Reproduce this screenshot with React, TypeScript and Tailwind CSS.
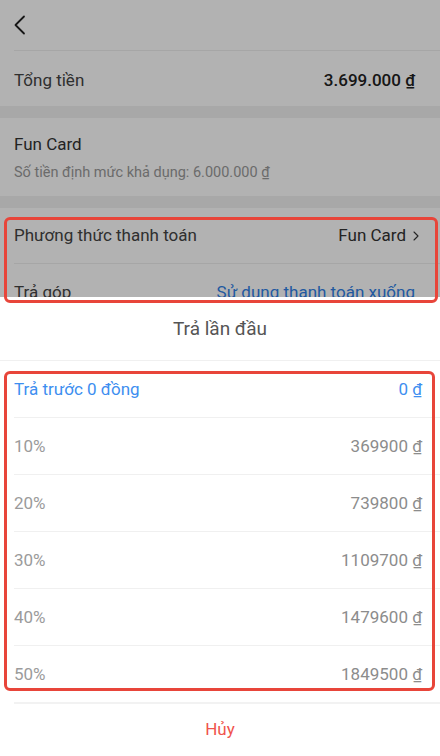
import { ChevronRight } from 'lucide-react';

const options = [
  { label: 'Trả trước 0 đồng', value: '0 ₫', active: true },
  { label: '10%', value: '369900 ₫' },
  { label: '20%', value: '739800 ₫' },
  { label: '30%', value: '1109700 ₫' },
  { label: '40%', value: '1479600 ₫' },
  { label: '50%', value: '1849500 ₫' },
];

export default function App() {
  return (
    <div
      className="relative h-[756px] w-[440px] overflow-hidden bg-[#f1f1f1]"
      style={{ fontFamily: 'Roboto, "Noto Sans", sans-serif' }}
    >
      {/* page under the sheet */}
      <div className="flex flex-col">
        <div className="bg-white">
          <div className="flex h-[50px] items-center pl-[13px] text-[#222]">
            <svg width="14" height="20" viewBox="0 0 14 20" fill="none">
              <polyline points="11,1.5 2.5,10 11,18.5" stroke="currentColor" strokeWidth="1.8" strokeLinecap="round" strokeLinejoin="round" />
            </svg>
          </div>
          <div className="ml-[14px] h-px bg-[#eeeeee]" />
          <div className="flex h-[55px] items-center justify-between pl-[14px] pr-[25px] pt-[4px] text-[17px]">
            <span className="text-[#444]">Tổng tiền</span>
            <span className="font-medium text-[#222]">3.699.000 ₫</span>
          </div>
        </div>
        <div className="h-[12px]" />
        <div className="flex h-[78px] flex-col justify-center gap-[4px] bg-white pl-[14px] pt-[2px]">
          <span className="text-[17px] text-[#333]">Fun Card</span>
          <span className="text-[14.5px] text-[#9a9a9a]">Số tiền định mức khả dụng: 6.000.000 ₫</span>
        </div>
        <div className="h-[12px]" />
        <div className="bg-white">
          <div className="flex h-[55px] items-center justify-between pl-[14px] pr-[16px] pt-[1px] text-[17px]">
            <span className="text-[#444]">Phương thức thanh toán</span>
            <span className="flex items-center gap-[2px] text-[#333]">
              Fun Card
              <ChevronRight size={16} strokeWidth={1.6} />
            </span>
          </div>
          <div className="ml-[14px] h-px bg-[#eeeeee]" />
          <div className="flex h-[55px] items-center justify-between pl-[14px] pr-[25px] pt-[2px] text-[17px]">
            <span className="text-[#444]">Trả góp</span>
            <span className="text-[#2f7fe6]">Sử dụng thanh toán xuống</span>
          </div>
        </div>
      </div>

      {/* dim overlay */}
      <div className="absolute inset-0 bg-black/[0.3]" />

      {/* bottom sheet */}
      <div className="absolute bottom-0 left-0 right-0 flex h-[459px] flex-col bg-white">
        <div className="flex h-[63px] items-center justify-center pt-[2px] text-[19px] text-[#555]">Trả lần đầu</div>
        <div className="h-px bg-[#f0f0f0]" />
        {options.map((o, i) => (
          <div key={o.label}>
            {i > 0 && <div className="ml-[14px] h-px bg-[#f0f0f0]" />}
            <div className="flex h-[56px] items-center justify-between pl-[14px] pr-[18px] pt-[2px] text-[17px]">
              <span className={o.active ? 'text-[#3d8ef0]' : 'text-[#9b9b9b]'}>{o.label}</span>
              <span className={o.active ? 'text-[#3d8ef0]' : 'text-[#8c8c8c]'}>{o.value}</span>
            </div>
          </div>
        ))}
        <div className="ml-[14px] h-[2px] bg-[#f2f2f2]" />
        <div className="flex flex-1 items-center justify-center text-[17px] text-[#f0534c]">Hủy</div>
      </div>

      {/* red annotation boxes */}
      <div className="pointer-events-none absolute left-[4px] top-[217px] h-[86px] w-[434px] rounded-[6px] border-[3px] border-[#e8453a]" />
      <div className="pointer-events-none absolute left-[4px] top-[371px] h-[320px] w-[431px] rounded-[6px] border-[3px] border-[#e8453a]" />
    </div>
  );
}
